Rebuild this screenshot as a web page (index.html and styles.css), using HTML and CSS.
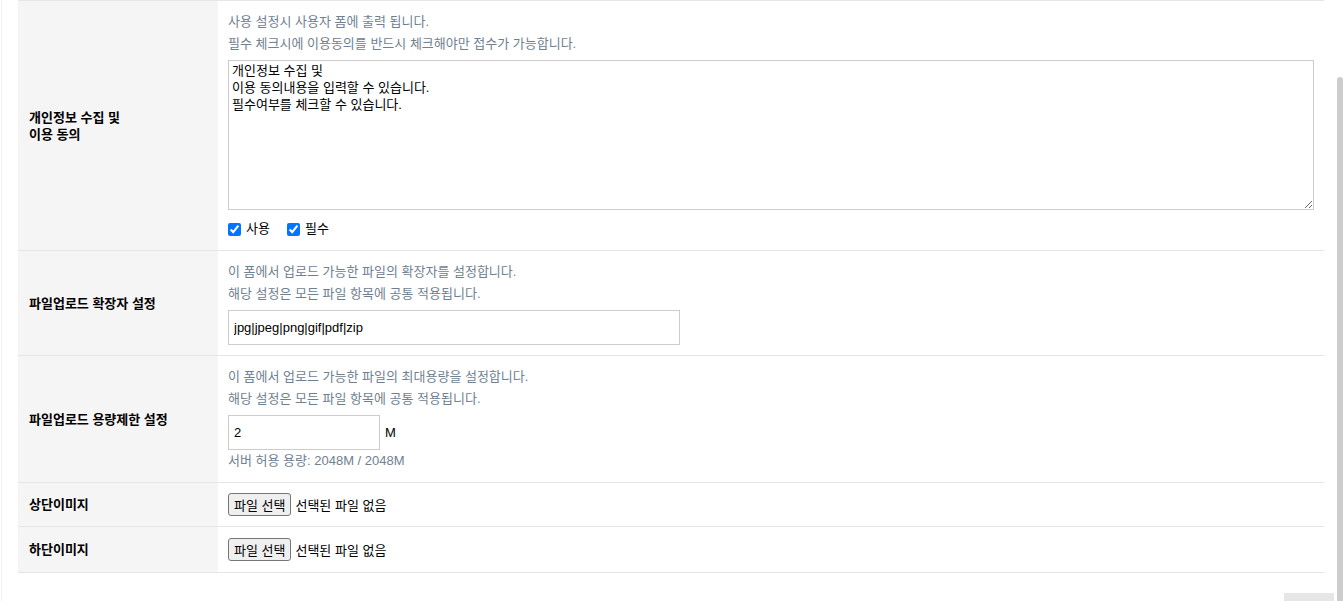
FILE: index.html
```html
<!DOCTYPE html>
<html lang="ko">
<head>
    <meta charset="UTF-8">
    <title>폼 설정</title>
    <link rel="stylesheet" href="styles.css">
</head>
<body>
    <div class="page">
        <table class="form-table">
            <tr>
                <th>개인정보 수집 및<br>이용 동의</th>
                <td>
                    <p class="help">사용 설정시 사용자 폼에 출력 됩니다.</p>
                    <p class="help">필수 체크시에 이용동의를 반드시 체크해야만 접수가 가능합니다.</p>
                    <textarea class="agree-text">개인정보 수집 및
이용 동의내용을 입력할 수 있습니다.
필수여부를 체크할 수 있습니다.</textarea>
                    <div class="checks">
                        <label class="check"><input type="checkbox" checked> 사용</label>
                        <label class="check"><input type="checkbox" checked> 필수</label>
                    </div>
                </td>
            </tr>
            <tr>
                <th>파일업로드 확장자 설정</th>
                <td>
                    <p class="help">이 폼에서 업로드 가능한 파일의 확장자를 설정합니다.</p>
                    <p class="help">해당 설정은 모든 파일 항목에 공통 적용됩니다.</p>
                    <input type="text" class="field field-ext" value="jpg|jpeg|png|gif|pdf|zip">
                </td>
            </tr>
            <tr>
                <th>파일업로드 용량제한 설정</th>
                <td>
                    <p class="help">이 폼에서 업로드 가능한 파일의 최대용량을 설정합니다.</p>
                    <p class="help">해당 설정은 모든 파일 항목에 공통 적용됩니다.</p>
                    <div class="size-row">
                        <input type="text" class="field field-size" value="2">
                        <span>M</span>
                    </div>
                    <p class="help">서버 허용 용량: 2048M / 2048M</p>
                </td>
            </tr>
            <tr>
                <th>상단이미지</th>
                <td>
                    <div class="file-pick">
                        <button type="button" class="file-btn">파일 선택</button>
                        <span class="file-name">선택된 파일 없음</span>
                    </div>
                </td>
            </tr>
            <tr class="last-row">
                <th>하단이미지</th>
                <td>
                    <div class="file-pick">
                        <button type="button" class="file-btn">파일 선택</button>
                        <span class="file-name">선택된 파일 없음</span>
                    </div>
                </td>
            </tr>
        </table>
    </div>

    <div class="top-btn"></div>
    <div class="scroll-thumb"></div>
</body>
</html>
```

FILE: styles.css
```css
* {
    margin: 0;
    padding: 0;
    box-sizing: border-box;
}

html {
    overflow: hidden;
}

body {
    background-color: #fff;
    font-family: "Liberation Sans", "Noto Sans CJK KR", sans-serif;
    font-size: 13px;
    color: #000;
}

.page {
    margin-left: 1px;
    border-left: 1px solid #f2f2f2;
    padding: 0 19px 0 16px;
    min-height: 601px;
}

.form-table {
    width: 100%;
    border-collapse: collapse;
    border-top: 1px solid #e5e5e5;
}

.form-table tr {
    border-bottom: 1px solid #e5e5e5;
}

.form-table th {
    width: 200px;
    padding: 0 9px 0 11px;
    background-color: #f5f5f5;
    font-weight: bold;
    text-align: left;
    line-height: 17px;
    vertical-align: middle;
}

.form-table td {
    padding: 10px;
    vertical-align: top;
}

.form-table .last-row td {
    padding: 11px 10px;
}

.help {
    line-height: 22px;
    color: #6f8191;
}

.agree-text {
    display: block;
    width: 100%;
    height: 150px;
    margin-top: 5px;
    padding: 1px 3px;
    border: 1px solid #ccc;
    font-family: inherit;
    font-size: 13px;
    line-height: 17px;
    color: #000;
    outline: none;
}

.checks {
    display: flex;
    align-items: center;
    margin-top: 8px;
    line-height: 22px;
}

.check {
    display: flex;
    align-items: center;
    margin-right: 17px;
}

.check input {
    width: 13px;
    height: 13px;
    margin: 0 5px 0 0;
}

.field {
    height: 35px;
    margin-top: 5px;
    padding: 0 5px;
    border: 1px solid #ccc;
    font-family: inherit;
    font-size: 13px;
    color: #000;
    outline: none;
}

.field-ext {
    display: block;
    width: 452px;
}

.size-row {
    display: flex;
    align-items: center;
    gap: 5px;
}

.field-size {
    width: 152px;
}

.size-row span {
    margin-top: 5px;
}

.file-pick {
    display: flex;
    align-items: center;
    height: 23px;
}

.file-btn {
    height: 23px;
    padding: 0 5px;
    border: 1px solid #767676;
    border-radius: 3px;
    background-color: #efefef;
    font-family: inherit;
    font-size: 13px;
    color: #000;
}

.file-name {
    margin-left: 4px;
}

.top-btn {
    position: fixed;
    top: 593px;
    left: 1284px;
    width: 50px;
    height: 30px;
    background-color: #e6e6e6;
}

.scroll-thumb {
    position: fixed;
    top: 77px;
    bottom: 0;
    left: 1337px;
    width: 6px;
    border-radius: 3px 3px 0 0;
    background-color: #cdcdcd;
}
```
